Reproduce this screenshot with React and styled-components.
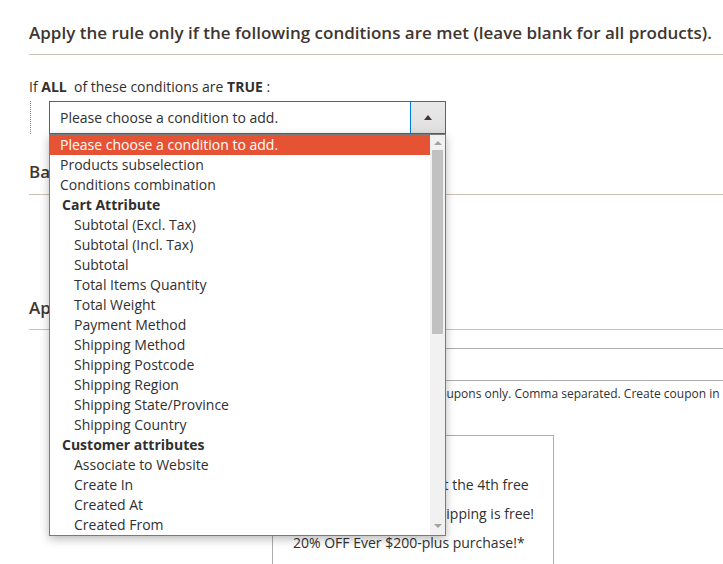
import React from 'react';
import styled, { createGlobalStyle } from 'styled-components';

const GlobalStyle = createGlobalStyle`
  html, body {
    margin: 0;
    padding: 0;
    background: #fff;
    overflow: hidden;
  }
  body {
    font-family: "Open Sans", "Liberation Sans", sans-serif;
    color: #303030;
  }
`;

const Page = styled.div`
  width: 723px;
  height: 564px;
  overflow: hidden;
  padding-left: 29px;
  box-sizing: border-box;
`;

const SectionTitle = styled.div`
  margin-top: ${p => p.$top}px;
  font-size: 17px;
  line-height: 20px;
  font-weight: 600;
  color: #41362f;
  padding-bottom: ${p => p.$pad}px;
  border-bottom: 1px solid #cac3b4;
  white-space: nowrap;
`;

const RuleLine = styled.div`
  margin-top: 22px;
  font-size: 14px;
  line-height: 20px;
  color: #303030;

  b {
    font-weight: 700;
  }
`;

const ChildList = styled.div`
  margin-top: 4px;
  margin-left: 1px;
  padding-left: 18px;
  border-left: 1px dotted #8a8a8a;
`;

const SelectWrap = styled.div`
  position: relative;
  width: 397px;
  height: 33px;
  box-sizing: border-box;
  border: 1px solid #007bdb;
  display: flex;
  background: #fff;
`;

const SelectValue = styled.div`
  flex: 1;
  padding-left: 10px;
  font-size: 14px;
  line-height: 31px;
  color: #303030;
`;

const SelectArrow = styled.div`
  width: 34px;
  border-left: 1px solid #007bdb;
  background: linear-gradient(#e8e8e8, #e0e0e0);
  display: flex;
  align-items: center;
  justify-content: center;

  &::after {
    content: '';
    border-left: 4px solid transparent;
    border-right: 4px solid transparent;
    border-bottom: 5px solid #41362f;
    margin-top: -1px;
  }
`;

const DropList = styled.div`
  position: absolute;
  top: 32px;
  left: -1px;
  width: 397px;
  height: 402px;
  box-sizing: border-box;
  border: 1px solid #7a7a7a;
  background: #fff;
  display: flex;
  box-shadow: 0 3px 9px rgba(0, 0, 0, 0.28);
  z-index: 10;
`;

const Options = styled.div`
  flex: 1;
  overflow: hidden;
`;

const Option = styled.div`
  height: 20px;
  line-height: 20px;
  font-size: 14px;
  white-space: nowrap;
  padding-left: ${p => (p.$nested ? 24 : p.$group ? 12 : 10)}px;
  font-weight: ${p => (p.$group ? 700 : 400)};
  color: ${p => (p.$active ? '#fff' : '#303030')};
  background: ${p => (p.$active ? '#e65334' : 'transparent')};
`;

const Scrollbar = styled.div`
  width: 15px;
  background: #f1f1f1;
  display: flex;
  flex-direction: column;
`;

const ScrollButton = styled.div`
  height: ${p => (p.$down ? 18 : 15)}px;
  display: flex;
  align-items: center;
  justify-content: center;

  &::after {
    content: '';
    border-left: 4px solid transparent;
    border-right: 4px solid transparent;
    ${p => (p.$down ? 'border-top: 4px solid #a3a3a3;' : 'border-bottom: 4px solid #a3a3a3;')}
  }
`;

const ScrollTrack = styled.div`
  flex: 1;
  padding: 0 2px;
`;

const ScrollThumb = styled.div`
  height: 184px;
  background: #c1c1c1;
`;

const SectionBody = styled.div`
  height: ${p => p.$height}px;
`;

const FormRow = styled.div`
  display: grid;
  grid-template-columns: 243px 1fr;
  margin-top: ${p => p.$top}px;
`;

const Label = styled.div`
  font-size: 14px;
  font-weight: 600;
  color: #303030;
  text-align: right;
  padding-right: 30px;
  line-height: 33px;
`;

const Input = styled.div`
  width: 520px;
  height: 33px;
  box-sizing: border-box;
  border: 1px solid #adadad;
  background: #fff;
`;

const Note = styled.div`
  margin-top: 5px;
  font-size: 12px;
  line-height: 16px;
  color: #303030;
  white-space: nowrap;
`;

const TextArea = styled.div`
  width: 282px;
  height: 160px;
  box-sizing: border-box;
  border: 1px solid #adadad;
  padding: 5px 0 0 20px;
  font-size: 14px;
  line-height: 29px;
  color: #303030;
  white-space: nowrap;
`;

const options = [
  { label: 'Please choose a condition to add.', active: true },
  { label: 'Products subselection' },
  { label: 'Conditions combination' },
  { label: 'Cart Attribute', group: true },
  { label: 'Subtotal (Excl. Tax)', nested: true },
  { label: 'Subtotal (Incl. Tax)', nested: true },
  { label: 'Subtotal', nested: true },
  { label: 'Total Items Quantity', nested: true },
  { label: 'Total Weight', nested: true },
  { label: 'Payment Method', nested: true },
  { label: 'Shipping Method', nested: true },
  { label: 'Shipping Postcode', nested: true },
  { label: 'Shipping Region', nested: true },
  { label: 'Shipping State/Province', nested: true },
  { label: 'Shipping Country', nested: true },
  { label: 'Customer attributes', group: true },
  { label: 'Associate to Website', nested: true },
  { label: 'Create In', nested: true },
  { label: 'Created At', nested: true },
  { label: 'Created From', nested: true },
];

const ConditionSelect = () => (
  <SelectWrap>
    <SelectValue>Please choose a condition to add.</SelectValue>
    <SelectArrow />
    <DropList>
      <Options>
        {options.map(o => (
          <Option key={o.label} $active={o.active} $group={o.group} $nested={o.nested}>
            {o.label}
          </Option>
        ))}
      </Options>
      <Scrollbar>
        <ScrollButton />
        <ScrollTrack>
          <ScrollThumb />
        </ScrollTrack>
        <ScrollButton $down />
      </Scrollbar>
    </DropList>
  </SelectWrap>
);

const App = () => (
  <Page>
    <GlobalStyle />
    <SectionTitle $top={23} $pad={11}>
      Apply the rule only if the following conditions are met (leave blank for all products).
    </SectionTitle>
    <RuleLine>
      If <b>ALL</b>&nbsp; of these conditions are <b>TRUE</b> :
    </RuleLine>
    <ChildList>
      <ConditionSelect />
    </ChildList>

    <SectionTitle $top={28} $pad={12}>Badge Settings</SectionTitle>
    <SectionBody $height={103} />

    <SectionTitle $top={0} $pad={11}>Apply to Coupons</SectionTitle>
    <FormRow $top={18}>
      <Label>Coupon Codes</Label>
      <div>
        <Input />
        <Note>This rule applies to specified coupons only. Comma separated. Create coupon in</Note>
      </div>
    </FormRow>
    <FormRow $top={33}>
      <Label>Promo Messages</Label>
      <TextArea>
        <div>Promotions:</div>
        <div>Buy any 3 items and get the 4th free</div>
        <div>All orders over $100, shipping is free!</div>
        <div>20% OFF Ever $200-plus purchase!*</div>
      </TextArea>
    </FormRow>
  </Page>
);

export default App;
